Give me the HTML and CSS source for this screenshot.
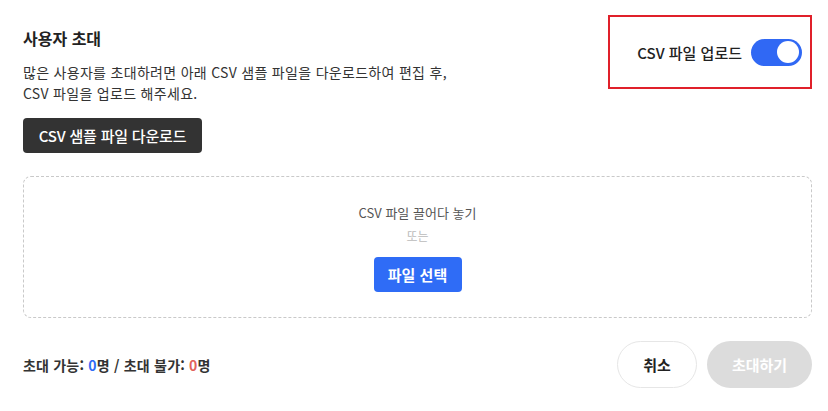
FILE: index.html
```html
<!DOCTYPE html>
<html lang="ko">
  <head>
    <meta charset="UTF-8" />
    <meta name="viewport" content="width=device-width, initial-scale=1.0" />
    <title>사용자 초대</title>
    <link rel="stylesheet" href="styles.css">
  </head>
  <body>
    <div class="page">
      <div class="header">
        <div class="intro">
          <div class="title">사용자 초대</div>
          <p class="desc">
            많은 사용자를 초대하려면 아래 CSV 샘플 파일을 다운로드하여 편집 후,<br />
            CSV 파일을 업로드 해주세요.
          </p>
          <button class="btn-dark">CSV 샘플 파일 다운로드</button>
        </div>
        <div class="upload-switch">
          <span class="switch-label">CSV 파일 업로드</span>
          <span class="toggle"><span class="knob"></span></span>
        </div>
      </div>

      <div class="dropzone">
        <div class="drop-text">CSV 파일 끌어다 놓기</div>
        <div class="drop-or">또는</div>
        <button class="btn-blue">파일 선택</button>
      </div>

      <div class="footer">
        <div class="count">
          초대 가능: <span class="ok">0</span>명 / 초대 불가: <span class="bad">0</span>명
        </div>
        <div class="actions">
          <button class="btn-cancel">취소</button>
          <button class="btn-invite" disabled>초대하기</button>
        </div>
      </div>
    </div>
  </body>
</html>
```

FILE: styles.css
```css
* {
  box-sizing: border-box;
}
body {
  margin: 0;
  background: #fff;
  font-family: "Noto Sans CJK KR", "Noto Sans", sans-serif;
  color: #222;
}
button {
  font-family: inherit;
  cursor: pointer;
}
.page {
  padding: 15px 16px 0 23px;
}
.header {
  display: flex;
  justify-content: space-between;
  align-items: flex-start;
}
.intro {
  padding-top: 11px;
}
.title {
  font-size: 16px;
  font-weight: 700;
  line-height: 24px;
  color: #222;
}
.desc {
  margin: 12px 0 0;
  font-size: 14px;
  line-height: 21px;
  color: #333;
  letter-spacing: 0.3px;
}
.btn-dark {
  margin-top: 14px;
  height: 35px;
  width: 179px;
  border: none;
  border-radius: 4px;
  background: #333;
  color: #fff;
  font-size: 15px;
  font-weight: 500;
  letter-spacing: -0.2px;
}
.upload-switch {
  width: 204px;
  height: 74px;
  border: 2px solid #e0202a;
  display: flex;
  align-items: center;
  justify-content: flex-end;
  gap: 9px;
  padding-right: 8px;
}
.switch-label {
  font-size: 15px;
  font-weight: 500;
  color: #222;
}
.toggle {
  width: 51px;
  height: 27px;
  border-radius: 14px;
  background: #3068f4;
  display: flex;
  align-items: center;
  justify-content: flex-end;
  padding-right: 3px;
}
.knob {
  width: 22px;
  height: 22px;
  border-radius: 50%;
  background: #fff;
}
.dropzone {
  margin-top: 23px;
  height: 142px;
  border: 1px dashed #c9c9c9;
  border-radius: 8px;
  display: flex;
  flex-direction: column;
  align-items: center;
  justify-content: center;
}
.drop-text {
  font-size: 13px;
  line-height: 20px;
  color: #555;
}
.drop-or {
  margin-top: 4px;
  font-size: 12px;
  line-height: 18px;
  color: #bbb;
}
.btn-blue {
  margin-top: 12px;
  width: 88px;
  height: 35px;
  border: none;
  border-radius: 4px;
  background: #2f6cf6;
  color: #fff;
  font-size: 15px;
  font-weight: 700;
}
.footer {
  margin-top: 23px;
  display: flex;
  justify-content: space-between;
  align-items: center;
}
.count {
  font-size: 14px;
  font-weight: 600;
  color: #333;
  letter-spacing: 0.2px;
  padding-top: 1px;
}
.ok {
  color: #2f6cf6;
}
.bad {
  color: #e2625c;
}
.actions {
  display: flex;
  gap: 10px;
}
.btn-cancel {
  width: 80px;
  height: 47px;
  border: 1px solid #e6e6e6;
  border-radius: 24px;
  background: #fff;
  color: #222;
  font-size: 15px;
  font-weight: 700;
}
.btn-invite {
  width: 105px;
  height: 47px;
  border: none;
  border-radius: 24px;
  background: #dcdcdc;
  color: #fff;
  font-size: 15px;
  font-weight: 700;
}
```
